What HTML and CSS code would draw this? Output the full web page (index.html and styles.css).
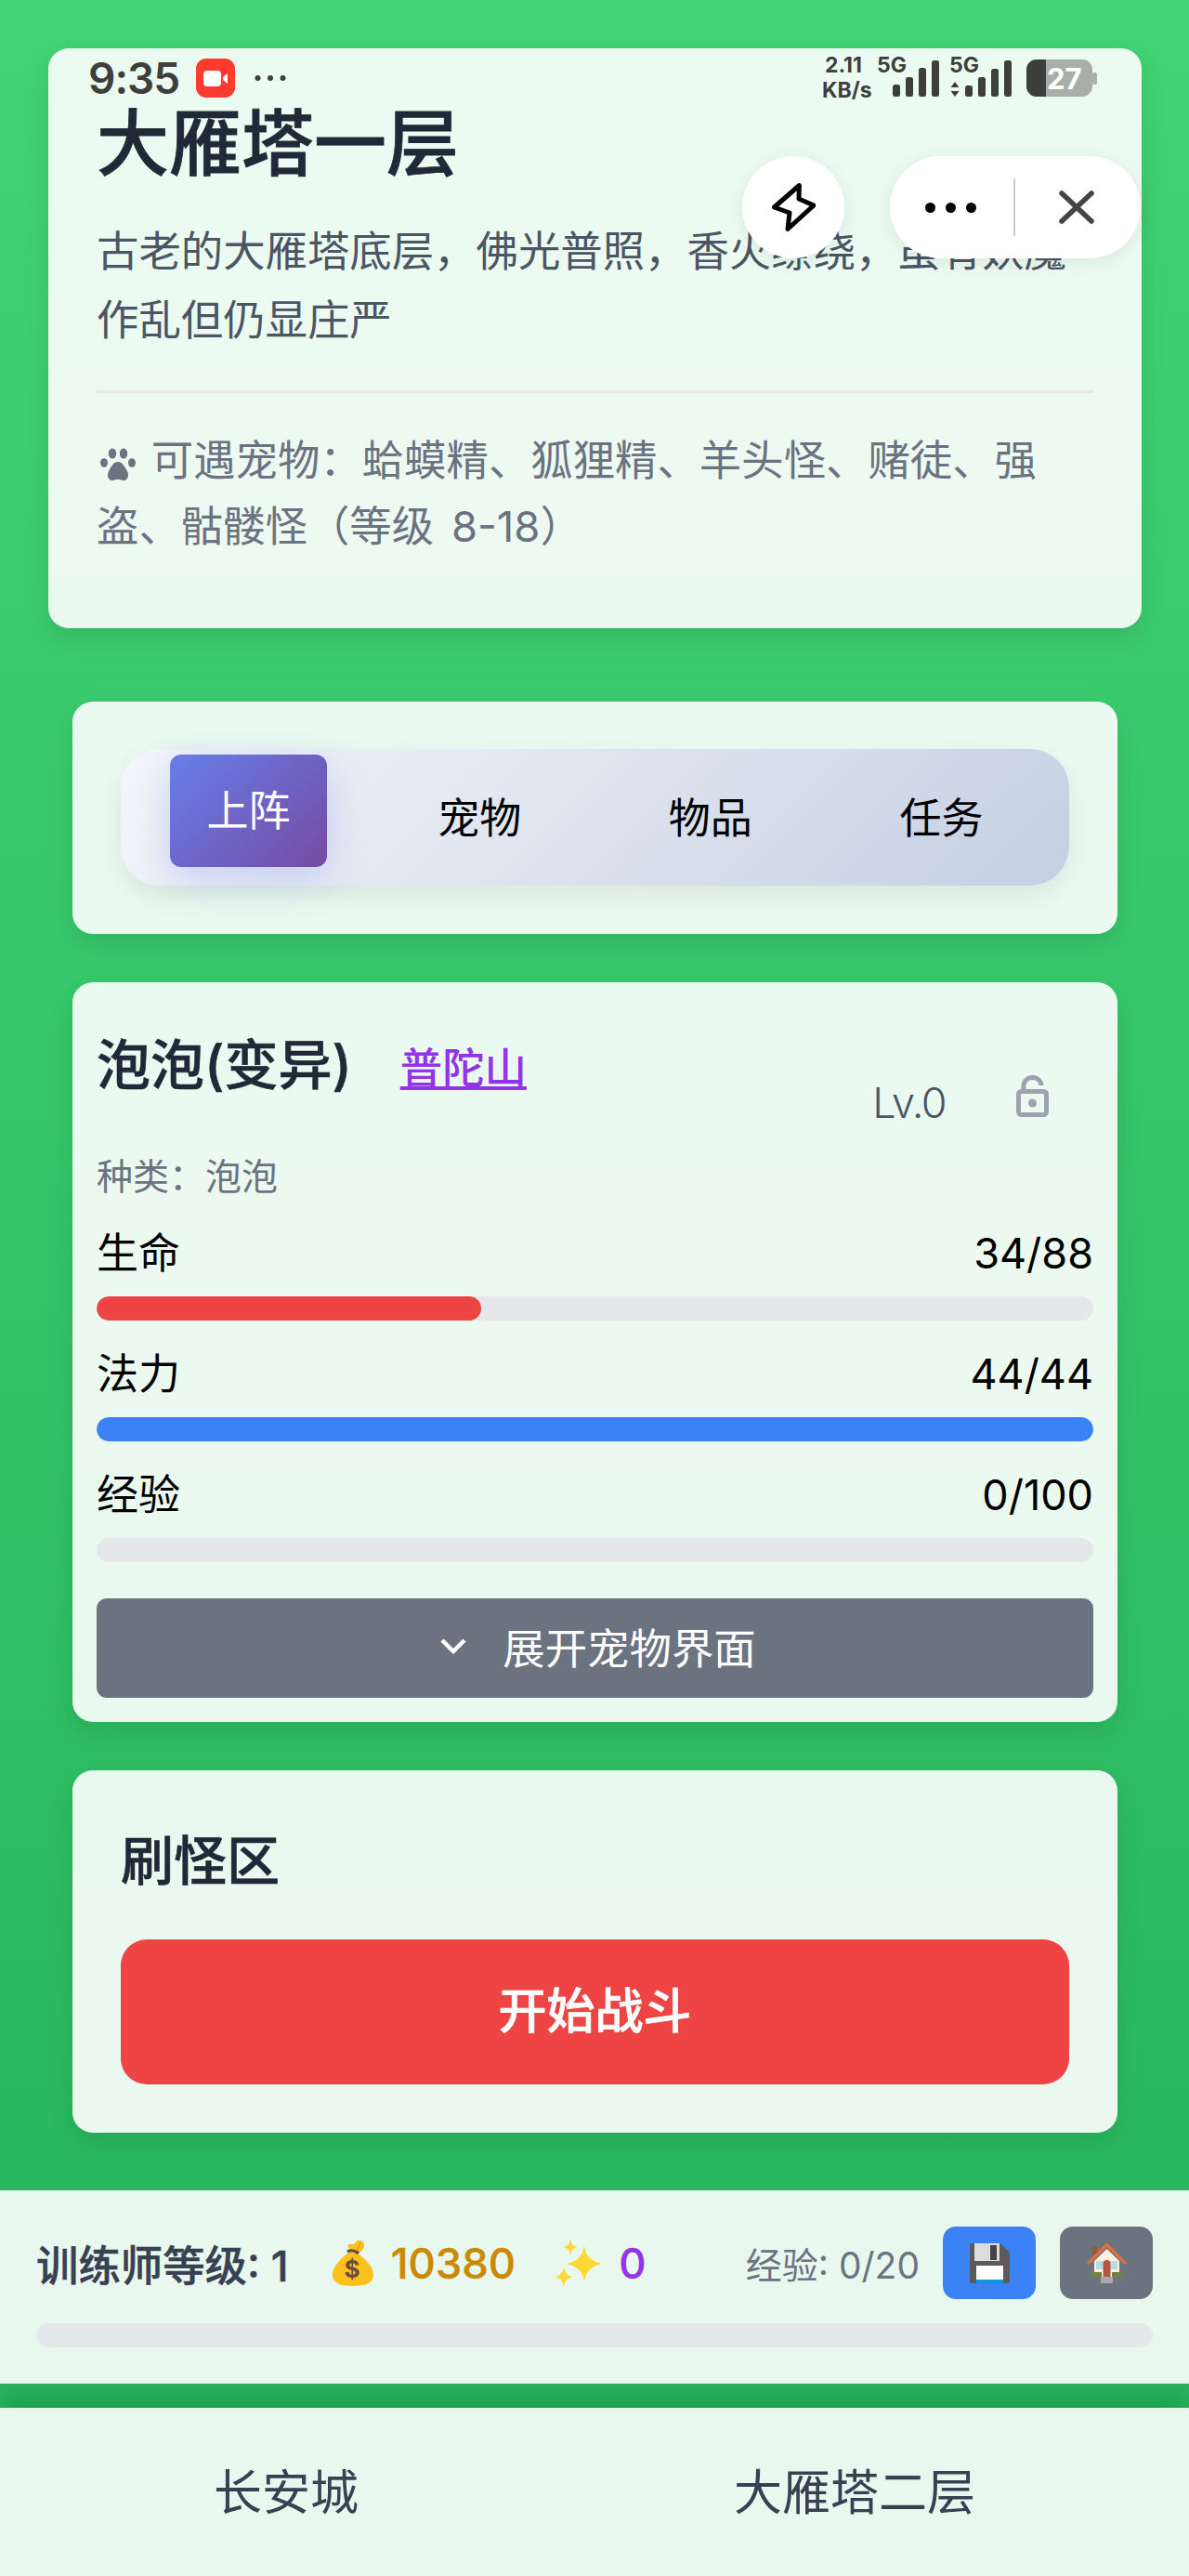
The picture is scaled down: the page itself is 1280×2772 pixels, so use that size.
FILE: index.html
```html
<!DOCTYPE html>
<html lang="zh-CN">
	<head>
		<meta charset="UTF-8" />
		<title>大雁塔一层</title>
		<link rel="stylesheet" href="styles.css">
	</head>
	<body>
		<div class="page">
			<div class="statusbar">
				<div class="status-left">
					<span class="time">9:35</span>
					<svg class="rec" viewBox="0 0 42 42" width="42" height="42">
						<rect width="42" height="42" rx="11" fill="#fb3a30" />
						<rect x="8" y="13" width="19" height="17" rx="4" fill="#fff" />
						<path d="M29 20l5-4v11l-5-4z" fill="#fff" />
					</svg>
					<svg class="more" viewBox="0 0 34 8" width="34" height="8">
						<circle cx="3.5" cy="4" r="3" fill="#3d3f3c" />
						<circle cx="17" cy="4" r="3" fill="#3d3f3c" />
						<circle cx="30.500" cy="4" r="3" fill="#3d3f3c" />
					</svg>
				</div>
				<svg class="status-right" viewBox="880 48 301 68" width="301" height="68">
					<text class="st" x="888" y="78">2.11</text>
					<text class="st" x="885" y="105">KB/s</text>
					<text class="st" x="944" y="78">5G</text>
					<g fill="#3d3f3c">
						<rect x="961" y="91" width="8" height="13" rx="2.500" />
						<rect x="975" y="83" width="8" height="21" rx="2.500" />
						<rect x="989" y="73" width="8" height="31" rx="2.500" />
						<rect x="1003" y="65" width="8" height="39" rx="2.500" />
						<rect x="1039" y="92" width="8" height="12" rx="2.500" />
						<rect x="1053" y="83" width="8" height="21" rx="2.500" />
						<rect x="1067" y="74" width="8" height="30" rx="2.500" />
						<rect x="1081" y="65" width="8" height="39" rx="2.500" />
						<path d="M1028 88l4.500 6h-9zM1028 104l-4.500-6h9z" />
					</g>
					<text class="st" x="1022" y="78">5G</text>
					<rect x="1105" y="64" width="71" height="40" rx="11" fill="#a8aea9" />
					<rect x="1176" y="78" width="5" height="13" rx="2" fill="#a8aea9" />
					<path d="M1116 64h10v40h-10a11 11 0 0 1-11-11V75a11 11 0 0 1 11-11z" fill="#3d3f3c" />
					<text class="st-batt" x="1127" y="96">27</text>
				</svg>
			</div>

			<div class="capsule-wrap">
				<div class="flash">
					<svg viewBox="0 0 48 54" width="48" height="54" fill="none" stroke="#000" stroke-width="5" stroke-linejoin="round">
						<path d="M30.400 3.500L3.500 27L20 33L18 50.500L46 25L30 18Z" />
					</svg>
				</div>
				<div class="capsule">
					<div class="capsule-dots"><i></i><i></i><i></i></div>
					<div class="capsule-line"></div>
					<svg class="capsule-x" viewBox="0 0 38 36" width="38" height="36" stroke="#444" stroke-width="5.500" stroke-linecap="round">
						<path d="M3 3L35 33M35 3L3 33" />
					</svg>
				</div>
			</div>

			<div class="card info">
				<h1>大雁塔一层</h1>
				<p class="desc">古老的大雁塔底层，佛光普照，香火缭绕，虽有妖魔作乱但仍显庄严</p>
				<div class="meet">
					<svg class="paw" viewBox="0 0 38 36" width="38" height="36" fill="#6b7280">
						<ellipse cx="4" cy="16" rx="4" ry="4.800" />
						<ellipse cx="13" cy="6" rx="4.200" ry="5.500" />
						<ellipse cx="25" cy="6" rx="4.200" ry="5.500" />
						<ellipse cx="34" cy="16" rx="4" ry="4.800" />
						<path d="M19 15c-5 0-7 5-10 10-2 4-1 10 4 10 2.500 0 4-1.200 6-1.200s3.500 1.200 6 1.200c5 0 6-6 4-10-3-5-5-10-10-10z" />
					</svg>
					可遇宠物：蛤蟆精、狐狸精、羊头怪、赌徒、强盗、骷髅怪（等级 8-18）
				</div>
			</div>

			<div class="card tabs-card">
				<div class="tabs">
					<div class="tab active">上阵</div>
					<div class="tab">宠物</div>
					<div class="tab">物品</div>
					<div class="tab">任务</div>
				</div>
			</div>

			<div class="card pet">
				<div class="pet-head">
					<div class="pet-name">
						<span class="name">泡泡(变异)</span>
						<a class="place">普陀山</a>
					</div>
					<div class="pet-side">
						<span class="lv">Lv.0</span>
						<svg class="lock" viewBox="0 0 35 45" width="35" height="45" fill="none" stroke="#9ca3af" stroke-width="5">
							<rect x="2.500" y="17.500" width="30" height="25" rx="3" />
							<path d="M8 17V11a9.500 8.500 0 0 1 19 0" />
							<circle cx="17.500" cy="30" r="4.500" fill="#9ca3af" stroke="none" />
						</svg>
					</div>
				</div>
				<div class="pet-kind">种类：泡泡</div>
				<div class="stats">
					<div class="stat">
						<div class="stat-row"><span>生命</span><span>34/88</span></div>
						<div class="bar"><div class="bar-fill hp" style="width: 38.6%"></div></div>
					</div>
					<div class="stat">
						<div class="stat-row"><span>法力</span><span>44/44</span></div>
						<div class="bar"><div class="bar-fill mp" style="width: 100%"></div></div>
					</div>
					<div class="stat">
						<div class="stat-row"><span>经验</span><span>0/100</span></div>
						<div class="bar"></div>
					</div>
				</div>
				<button class="expand">
					<svg viewBox="0 0 28 18" width="28" height="18" fill="none" stroke="#fff" stroke-width="4.500">
						<path d="M2 3l12 12 12-12" />
					</svg>
					展开宠物界面
				</button>
			</div>

			<div class="card monster">
				<h2>刷怪区</h2>
				<button class="fight">开始战斗</button>
			</div>

			<div class="trainer">
				<div class="trainer-row">
					<div class="trainer-left">
						<span class="trainer-lv">训练师等级: 1</span>
						<span class="coin">
							<svg viewBox="0 0 45 50" width="45" height="50">
								<path d="M28 1c4-1 7 3 6 7-1 3-4 6-8 7l-7-3-3-6c2-2 5-1 7-1 2-2 3-4 5-4z" fill="#fcc21b" />
								<path d="M30 3l-4 9" stroke="#e0a010" stroke-width="1.500" fill="none" />
								<path d="M17 14c-8 7-17 14-17 24 0 8 7 12 22 12s22-4 22-12c0-10-10-17-17-24z" fill="#fcc21b" />
								<path d="M16 13c4-2 9-1 12 2" stroke="#6d4c41" stroke-width="3.500" fill="none" />
								<text class="dollar" x="21" y="41">$</text>
							</svg>
							<span>10380</span>
						</span>
						<span class="spark">
							<svg viewBox="0 0 51 52" width="51" height="52" fill="#fdd835">
								<path d="M32 8c2 11 7 16 19 19-12 3-17 8-19 19-2-11-7-16-19-19 12-3 17-8 19-19z" />
								<path d="M17 0c1 6 3 8 8 9-5 1-7 3-8 9-1-6-3-8-8-9 5-1 7-3 8-9z" />
								<path d="M10 30c1 7 4 10 10 11-6 1-9 4-10 11-1-7-4-10-10-11 6-1 9-4 10-11z" />
							</svg>
							<span>0</span>
						</span>
					</div>
					<div class="trainer-right">
						<span class="trainer-exp">经验: 0/20</span>
						<button class="icon-btn save">
							<svg viewBox="0 0 43 43" width="43" height="43">
								<path d="M2 0h31l10 10v31a2 2 0 0 1-2 2H2a2 2 0 0 1-2-2V2a2 2 0 0 1 2-2z" fill="#5a5a5c" />
								<path d="M5 0h27v19H5z" fill="#dcdcdc" />
								<path d="M22 2h7v16h-7z" fill="#444" />
								<path d="M7 24h29v15H7z" fill="#fff" />
								<path d="M7 39h29v4H7z" fill="#0f97e0" />
							</svg>
						</button>
						<button class="icon-btn home">
							<svg viewBox="0 0 43 44" width="43" height="44">
								<path d="M6 4h6v12H6z" fill="#8d5a44" />
								<path d="M8 20L21.500 7 35 20v18H8z" fill="#fdf1dd" />
								<path d="M0 22L21.500 0 43 22l-2 2L21.500 5 2 24z" fill="#e2703a" />
								<path d="M10 20h8v9h-8zM25 20h8v9h-8z" fill="#b7dde3" />
								<path d="M17.500 33v-10a4 4 0 0 1 8 0v14h-8z" fill="#b5583c" />
								<path d="M4 32h12v6H4zM27 32h12v6H27z" fill="#708240" />
								<path d="M15 37h13v7H15z" fill="#a9a9a9" />
							</svg>
						</button>
					</div>
				</div>
				<div class="bar"></div>
			</div>

			<div class="nav">
				<span>长安城</span>
				<span>大雁塔二层</span>
			</div>
		</div>
	</body>
</html>
```

FILE: styles.css
```css
* {
	box-sizing: border-box;
}
body {
	margin: 0;
	font-family: Inter, "Noto Sans CJK SC", sans-serif;
	color: #000;
}
h1,
h2,
p {
	margin: 0;
	font-weight: normal;
}
button {
	border: 0;
	padding: 0;
	font-family: inherit;
}
.page {
	position: relative;
	width: 1280px;
	height: 2772px;
	padding-top: 52px;
	overflow: hidden;
	background: linear-gradient(180deg, #42d374, #25b35a);
}

/* 系统状态栏 */
.statusbar {
	position: absolute;
	top: 0;
	left: 0;
	width: 100%;
	height: 120px;
	padding: 48px 99px 0 95px;
	display: flex;
	justify-content: space-between;
	z-index: 5;
}
.status-left {
	display: flex;
	align-items: center;
	height: 48px;
	margin-top: 12px;
}
.time {
	width: 116px;
	font-size: 46px;
	font-weight: 600;
	letter-spacing: -1px;
	color: #3d3f3c;
}
.rec {
	margin-right: 21px;
}
.st {
	font-size: 23px;
	font-weight: 700;
	fill: #3d3f3c;
}
.st-batt {
	font-size: 31px;
	font-weight: 700;
	fill: #fff;
}

/* 小程序胶囊 */
.capsule-wrap {
	position: absolute;
	top: 168px;
	left: 799px;
	display: flex;
	gap: 49px;
	z-index: 5;
}
.flash {
	width: 110px;
	height: 110px;
	border-radius: 50%;
	background: #fff;
	box-shadow: 0 4px 20px rgba(0, 0, 0, 0.08);
	display: flex;
	align-items: center;
	justify-content: center;
}
.capsule {
	width: 270px;
	height: 110px;
	border-radius: 55px;
	background: #fff;
	box-shadow: 0 4px 20px rgba(0, 0, 0, 0.08);
	display: flex;
	align-items: center;
	padding-left: 38px;
}
.capsule-dots {
	display: flex;
	gap: 11px;
}
.capsule-dots i {
	width: 11px;
	height: 11px;
	border-radius: 50%;
	background: #000;
}
.capsule-line {
	width: 2px;
	height: 62px;
	margin: 0 47px 0 40px;
	background: #ccc;
}

.card {
	margin: 52px 77px 0 78px;
	background: rgba(255, 255, 255, 0.9);
	border-radius: 22px;
	box-shadow: 0 11px 28px rgba(0, 0, 0, 0.1);
}

/* 地点信息 */
.info {
	margin: 0 51px 79px 52px;
	padding: 53px 52px 74px;
}
.info h1 {
	font-size: 78px;
	line-height: 100px;
	font-weight: 500;
	-webkit-text-stroke: 0.8px #1f2937;
	color: #1f2937;
}
.desc {
	margin-top: 29px;
	font-size: 45.400px;
	line-height: 74px;
	color: #4b5563;
}
.meet {
	margin-top: 38px;
	padding-top: 37px;
	border-top: 3px solid #e5e7eb;
	font-size: 45.400px;
	line-height: 71px;
	word-spacing: 6px;
	color: #6b7280;
}
.paw {
	margin: 0 -2px 0 4px;
	vertical-align: -6px;
}

/* 标签页 */
.tabs-card {
	margin-top: 0;
	padding: 51px 52px 52px;
}
.tabs {
	display: flex;
	justify-content: space-between;
	align-items: flex-start;
	height: 147px;
	padding: 6px 53px 0;
	border-radius: 42px;
	background: linear-gradient(135deg, #f5f7fa, #c3cfe2);
	box-shadow: 0 11px 28px rgba(0, 0, 0, 0.08);
}
.tab {
	width: 169px;
	height: 133px;
	padding-bottom: 3px;
	display: flex;
	align-items: center;
	justify-content: center;
	font-size: 45px;
}
.tab.active {
	height: 121px;
	padding-bottom: 6px;
	border-radius: 12px;
	color: #fff;
	background: linear-gradient(135deg, #667eea, #764ba2);
	box-shadow: 0 11px 45px rgba(102, 126, 234, 0.3);
}

/* 宠物卡片 */
.pet {
	padding: 49px 26px 26px;
}
.pet-head {
	display: flex;
	justify-content: space-between;
	align-items: flex-start;
	height: 130px;
}
.pet-name {
	display: flex;
	align-items: center;
	gap: 52px;
	height: 72px;
}
.name {
	font-size: 58px;
	font-weight: 500;
	-webkit-text-stroke: 0.6px #1f2937;
	color: #1f2937;
}
.place {
	margin-top: 8px;
	font-size: 45.400px;
	font-weight: 500;
	color: #9333ea;
	text-decoration: underline;
}
.pet-side {
	display: flex;
	align-items: flex-start;
	gap: 76px;
	margin: 51px 48px 0 0;
}
.lv {
	margin-top: 2px;
	font-size: 45px;
	font-weight: 300;
	letter-spacing: -1.500px;
	color: #4b5563;
}
.pet-kind {
	font-size: 39px;
	line-height: 60px;
	color: #6b7280;
}
.stats {
	display: flex;
	flex-direction: column;
	gap: 23px;
	margin-top: 18px;
}
.stat-row {
	display: flex;
	justify-content: space-between;
	font-size: 45px;
	line-height: 70px;
	margin-bottom: 11px;
}
.bar {
	height: 26px;
	border-radius: 13px;
	background: #e5e7eb;
	overflow: hidden;
}
.bar-fill {
	height: 100%;
	border-radius: 13px;
}
.hp {
	background: #ef4444;
}
.mp {
	background: #3b82f6;
}
.expand {
	width: 100%;
	height: 107px;
	margin-top: 39px;
	padding: 0 0 6px 7px;
	border-radius: 11px;
	background: #6b7280;
	color: #fff;
	font-size: 45.400px;
	display: flex;
	align-items: center;
	justify-content: center;
	gap: 39px;
}

/* 刷怪区 */
.monster {
	padding: 52px;
}
.monster h2 {
	padding-top: 3px;
	font-size: 57px;
	line-height: 86px;
	height: 86px;
	font-weight: 500;
	-webkit-text-stroke: 0.6px #1f2937;
	color: #1f2937;
}
.fight {
	display: block;
	width: 100%;
	height: 156px;
	margin-top: 44px;
	padding-bottom: 10px;
	border-radius: 28px;
	background: #ef4444;
	color: #fff;
	font-size: 52px;
	font-weight: 500;
	-webkit-text-stroke: 0.7px #fff;
}

/* 底部 */
.trainer {
	position: relative;
	height: 208px;
	margin-top: 62px;
	padding: 39px 39px 0;
	background: #e9f8ef;
}
.trainer-row {
	display: flex;
	justify-content: space-between;
	height: 78px;
	margin-bottom: 26px;
}
.trainer-left,
.trainer-right,
.coin,
.spark {
	display: flex;
	align-items: center;
}
.trainer-lv {
	font-size: 45.400px;
	font-weight: 500;
	-webkit-text-stroke: 0.5px #374151;
	color: #374151;
	margin-right: 47px;
}
.coin {
	gap: 18px;
	font-size: 45.400px;
	font-weight: 500;
	-webkit-text-stroke: 0.4px #ca8a04;
	color: #ca8a04;
	margin-right: 42px;
}
.dollar {
	font-size: 26px;
	font-weight: 700;
	fill: #6d4c41;
	text-anchor: middle;
}
.spark {
	gap: 18px;
	font-size: 45.400px;
	font-weight: 500;
	-webkit-text-stroke: 0.4px #9333ea;
	color: #9333ea;
}
.trainer-exp {
	font-size: 39px;
	color: #6b7280;
	margin-right: 25px;
}
.icon-btn {
	width: 100px;
	height: 78px;
	border-radius: 14px;
	display: flex;
	align-items: center;
	justify-content: center;
}
.save {
	background: #3b82f6;
}
.home {
	margin-left: 26px;
	background: #6b7280;
}
.nav {
	height: 182px;
	margin-top: 26px;
	padding: 0 28px 8px;
	background: rgba(255, 255, 255, 0.9);
	box-shadow: 0 -11px 28px rgba(0, 0, 0, 0.15);
	display: flex;
	align-items: center;
	justify-content: space-around;
	font-size: 52px;
	color: #374151;
}
```
